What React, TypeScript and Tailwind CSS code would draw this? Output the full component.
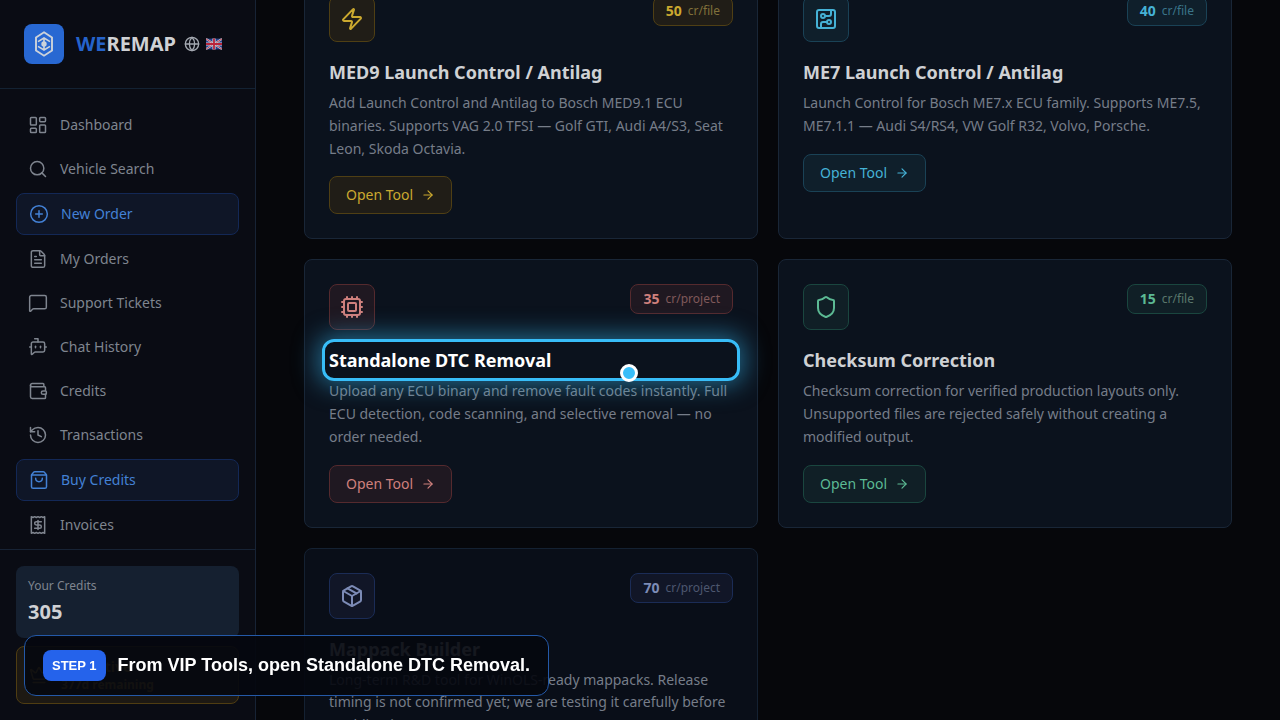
import type { ReactNode } from "react";
import {
  ArrowRight,
  BotMessageSquare,
  CircuitBoard,
  CirclePlus,
  Cpu,
  Crown,
  FileText,
  Globe,
  History,
  LayoutDashboard,
  MessageSquare,
  Package,
  Receipt,
  Search,
  Shield,
  ShoppingBag,
  Wallet,
  Zap,
  type LucideIcon,
} from "lucide-react";

const navItems: { label: string; icon: LucideIcon; active?: boolean }[] = [
  { label: "Dashboard", icon: LayoutDashboard },
  { label: "Vehicle Search", icon: Search },
  { label: "New Order", icon: CirclePlus, active: true },
  { label: "My Orders", icon: FileText },
  { label: "Support Tickets", icon: MessageSquare },
  { label: "Chat History", icon: BotMessageSquare },
  { label: "Credits", icon: Wallet },
  { label: "Transactions", icon: History },
  { label: "Buy Credits", icon: ShoppingBag, active: true },
  { label: "Invoices", icon: Receipt },
];

type Tool = {
  title: string;
  text: string;
  icon: LucideIcon;
  price: number;
  unit: string;
  box: string;
  ink: string;
  unitInk: string;
  dim?: boolean;
  focused?: boolean;
};

const tools: Tool[] = [
  {
    title: "MED9 Launch Control / Antilag",
    text: "Add Launch Control and Antilag to Bosch MED9.1 ECU binaries. Supports VAG 2.0 TFSI — Golf GTI, Audi A4/S3, Seat Leon, Skoda Octavia.",
    icon: Zap,
    price: 50,
    unit: "cr/file",
    box: "border-[#4f3f14] bg-[#201d17]",
    ink: "text-[#cba92f]",
    unitInk: "text-[#80703a]",
  },
  {
    title: "ME7 Launch Control / Antilag",
    text: "Launch Control for Bosch ME7.x ECU family. Supports ME7.5, ME7.1.1 — Audi S4/RS4, VW Golf R32, Volvo, Porsche.",
    icon: CircuitBoard,
    price: 40,
    unit: "cr/file",
    box: "border-[#1a4256] bg-[#0f1f2b]",
    ink: "text-[#45b2d6]",
    unitInk: "text-[#3a7489]",
  },
  {
    title: "Standalone DTC Removal",
    text: "Upload any ECU binary and remove fault codes instantly. Full ECU detection, code scanning, and selective removal — no order needed.",
    icon: Cpu,
    price: 35,
    unit: "cr/project",
    box: "border-[#552a2e] bg-[#1f1821]",
    ink: "text-[#cf807d]",
    unitInk: "text-[#80595a]",
    focused: true,
  },
  {
    title: "Checksum Correction",
    text: "Checksum correction for verified production layouts only. Unsupported files are rejected safely without creating a modified output.",
    icon: Shield,
    price: 15,
    unit: "cr/file",
    box: "border-[#1a463f] bg-[#101f26]",
    ink: "text-[#5cba94]",
    unitInk: "text-[#5a776c]",
  },
  {
    title: "Mappack Builder",
    text: "Long-term R&D tool for WinOLS-ready mappacks. Release timing is not confirmed yet; we are testing it carefully before enabling it.",
    icon: Package,
    price: 70,
    unit: "cr/project",
    box: "border-[#1b2c56] bg-[#111627]",
    ink: "text-[#7c8bb6]",
    unitInk: "text-[#4d576f]",
    dim: true,
  },
];

function Logo() {
  return (
    <span className="flex size-10 shrink-0 items-center justify-center rounded-lg bg-[#2868d2]">
      <svg viewBox="0 0 40 40" className="size-10" fill="none" stroke="#cdd3da" strokeWidth="1.9" aria-hidden="true">
        <path d="M20 8.3 28 13.4V26.6L20 31.7 12 26.6V13.4Z" />
        <path d="M14 17.6 20 14l6 3.6M14 22.4 20 26l6-3.6M20 14v12" strokeWidth="1.6" />
        <circle cx="20" cy="20" r="2.7" fill="#cdd3da" stroke="none" />
      </svg>
    </span>
  );
}

function UkFlag() {
  return (
    <svg viewBox="0 0 16 12" className="h-3 w-4" role="img" aria-label="English">
      <path fill="#27418c" d="M0 .6h16v10.8H0z" />
      <path d="M0 .9l16 10.2M16 .9L0 11.1" stroke="#c9cbd3" strokeWidth="1.9" />
      <path d="M0 .9l16 10.2M16 .9L0 11.1" stroke="#b9243a" strokeWidth=".8" />
      <path d="M8 .6v10.8M0 6h16" stroke="#c9cbd3" strokeWidth="3.2" />
      <path d="M8 .6v10.8M0 6h16" stroke="#b9243a" strokeWidth="1.8" />
    </svg>
  );
}

function Sidebar() {
  return (
    <aside className="flex w-64 shrink-0 flex-col border-r border-[#172335] bg-[#0a0c14]">
      <header className="flex items-center border-b border-[#132233] p-6">
        <Logo />
        <span className="ml-3 text-xl font-bold text-[#cfd1d4]">
          <span className="text-[#2563cb]">WE</span>REMAP
        </span>
        <button type="button" aria-label="Change language" className="ml-2 flex items-center gap-1.5 text-[#a4a9b1]">
          <Globe className="size-4" />
          <UkFlag />
        </button>
      </header>
      <nav className="flex min-h-0 flex-1 flex-col gap-1 overflow-hidden p-4">
        {navItems.map(({ label, icon: Icon, active }) => (
          <a
            key={label}
            href="#"
            className={
              active
                ? "flex shrink-0 items-center gap-3 rounded-lg border border-[#132856] bg-[#0f1627] px-3 py-2.5 text-sm text-[#4381d5]"
                : "flex shrink-0 items-center gap-3 rounded-lg px-3 py-2.5 text-sm text-[#7f858f]"
            }
          >
            <Icon className="size-5" strokeWidth={1.8} />
            {label}
          </a>
        ))}
      </nav>
      <footer className="flex flex-col gap-2 border-t border-[#172335] p-4">
        <div className="rounded-lg bg-[#152030] p-3">
          <p className="text-xs text-[#7f858f]">Your Credits</p>
          <p className="mt-1 text-xl font-bold text-[#cfd1d4]">305</p>
        </div>
        <div className="flex items-center gap-3 rounded-lg border border-[#4f3d12] bg-[#1d1913] px-3 py-2.5 text-[#a88420]">
          <Crown className="size-5" strokeWidth={1.8} />
          <div>
            <p className="text-sm font-bold">VIP Active</p>
            <p className="text-xs font-bold">377d remaining</p>
          </div>
        </div>
      </footer>
    </aside>
  );
}

function Spotlight({ children }: { children: ReactNode }) {
  return (
    <div className="relative">
      {children}
      <span className="pointer-events-none absolute -inset-[7px] rounded-xl border-3 border-[#38bdf8] shadow-[0_0_24px_4px_rgba(56,189,248,0.5)]" />
      <span className="pointer-events-none absolute top-[18px] left-[291px] size-[18px] rounded-full border-3 border-white bg-[#38bdf8]" />
    </div>
  );
}

function ToolCard({ tool }: { tool: Tool }) {
  const { icon: Icon, box, ink } = tool;
  return (
    <article
      className={`rounded-lg border p-6 ${tool.dim ? "border-[#142132] bg-[#090e18]" : "border-[#192637] bg-[#0b121d]"}`}
    >
      <div className="flex items-start justify-between">
        <span className={`flex size-[46px] items-center justify-center rounded-lg border ${box} ${ink}`}>
          <Icon className="size-6" />
        </span>
        <p className={`flex h-[30px] items-center gap-1.5 rounded-lg border px-3 ${box}`}>
          <span className={`text-sm font-bold ${ink}`}>{tool.price}</span>
          <span className={`text-xs ${tool.unitInk}`}>{tool.unit}</span>
        </p>
      </div>
      <div className="mt-4">
        {tool.focused ? (
          <Spotlight>
            <h2 className="text-lg leading-7 font-bold text-white">{tool.title}</h2>
          </Spotlight>
        ) : (
          <h2 className="text-lg leading-7 font-bold text-[#cfd1d4]">{tool.title}</h2>
        )}
      </div>
      <p className="mt-1.5 text-sm leading-relaxed text-[#767d89]">{tool.text}</p>
      <button
        type="button"
        className={`mt-4 flex h-[38px] items-center gap-2 rounded-lg border px-4 text-sm ${box} ${ink}`}
      >
        Open Tool
        <ArrowRight className="size-3.5" />
      </button>
    </article>
  );
}

export default function App() {
  return (
    <div className="flex h-screen overflow-hidden bg-[#06070b] font-['Noto_Sans',sans-serif]">
      <Sidebar />
      <main className="min-w-0 flex-1 overflow-hidden px-12">
        <div className="-mt-[29px] grid grid-cols-2 gap-5">
          {tools.map((tool) => (
            <ToolCard key={tool.title} tool={tool} />
          ))}
        </div>
      </main>
      <div
        role="status"
        className="fixed bottom-6 left-6 flex items-center gap-3 rounded-xl border border-[#2459a8] bg-[#05080f]/92 px-[18px] py-3.5 font-['Liberation_Sans',sans-serif] font-bold text-white"
      >
        <span className="rounded-lg bg-[#2563eb] px-[9px] py-2 text-[13px] leading-[15px]">STEP 1</span>
        <span className="text-lg leading-[21px]">From VIP Tools, open Standalone DTC Removal.</span>
      </div>
    </div>
  );
}
